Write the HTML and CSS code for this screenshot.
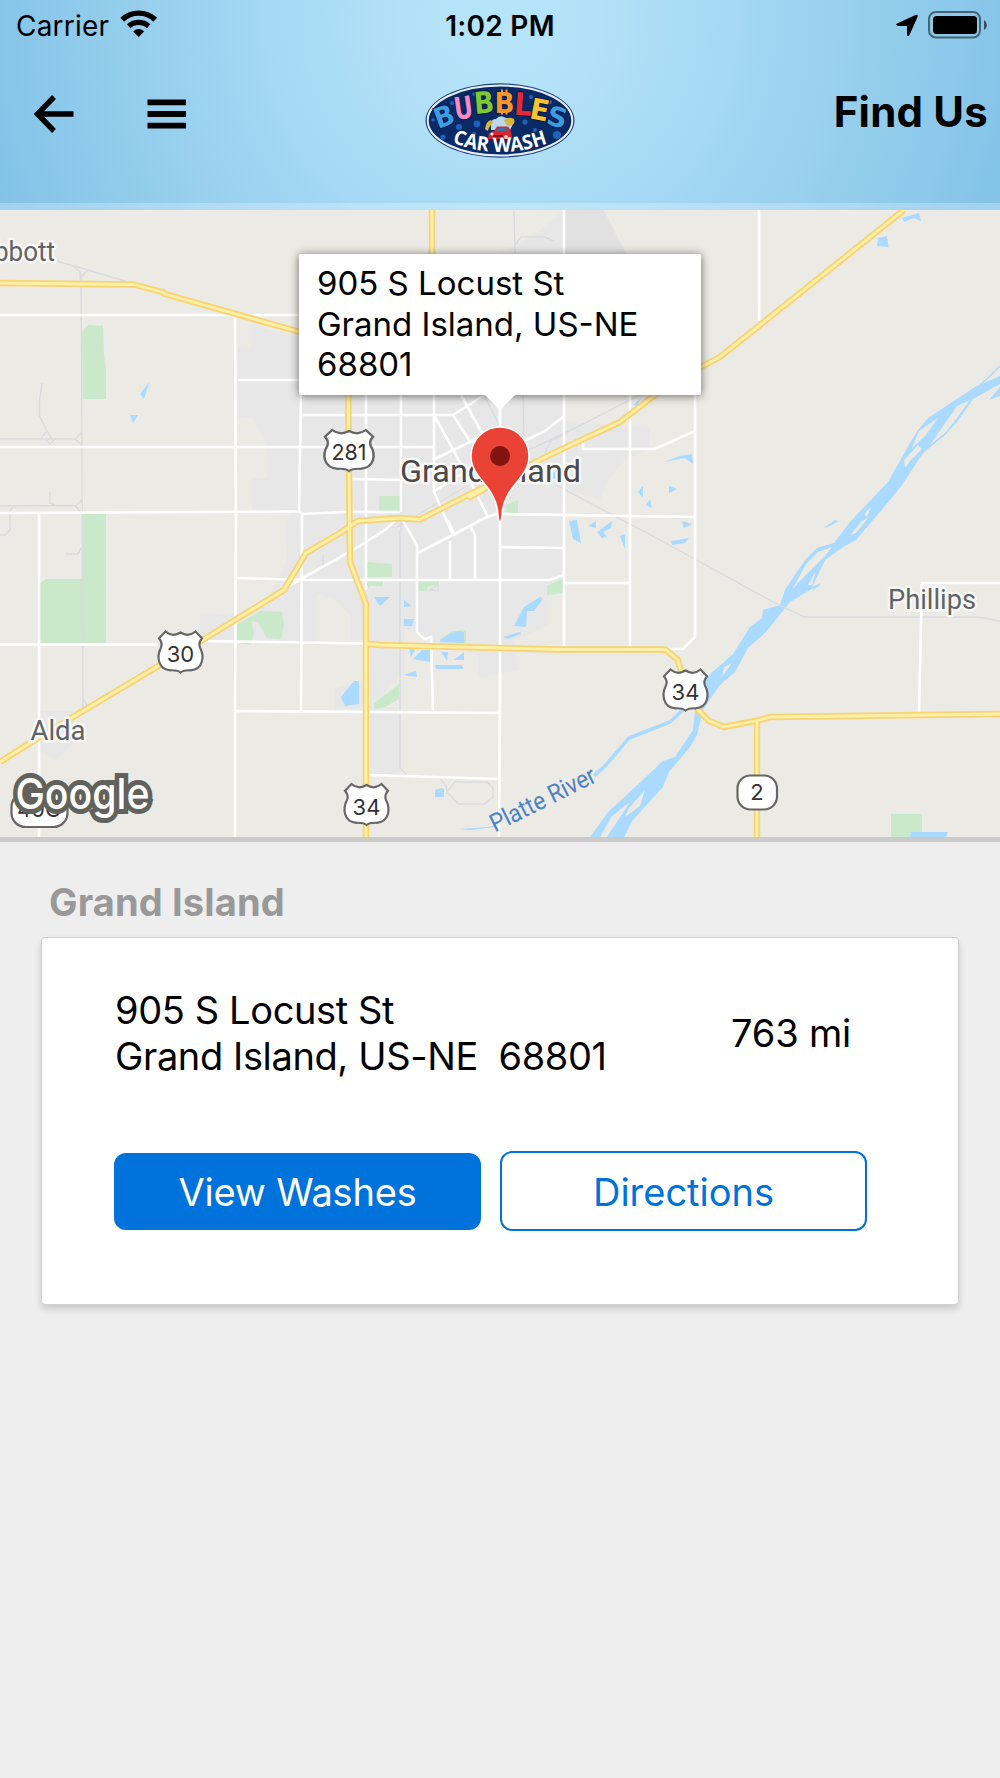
FILE: index.html
```
<!DOCTYPE html>
<html lang="en">
<head>
    <meta charset="UTF-8">
    <meta name="viewport" content="width=device-width, initial-scale=1.0">
    <title>Find Us</title>
    <link rel="stylesheet" href="styles.css">
</head>
<body>
    <header class="header">
        <div class="status-bar">
            <div class="status-left">
                <span class="carrier">Carrier</span>
                <svg class="wifi" width="38" height="28" viewBox="0 0 38 28">
                    <path d="M2.2 9.7 A24 24 0 0 1 35.2 9.7" fill="none" stroke="#000" stroke-width="5.4"/>
                    <path d="M8.7 16.2 A15 15 0 0 1 28.7 16.2" fill="none" stroke="#000" stroke-width="5.2"/>
                    <path d="M13.2 21.4 Q18.7 16.6 24.2 21.4 L18.7 27 Z"/>
                </svg>
            </div>
            <span class="time">1:02 PM</span>
            <div class="status-right">
                <svg width="24" height="24" viewBox="0 0 24 24">
                    <path d="M1 10.4 L19.5 2 Q22.4 1 21.5 4 L13.500 22 Q12 24.5 11 22 L11 13 L2 12.9 Q-1 12 1 10.4 Z"/>
                </svg>
                <svg width="60" height="28" viewBox="0 0 60 28">
                    <rect x="1" y="1" width="51" height="25.6" rx="7" fill="none" stroke="#000" stroke-opacity=".5" stroke-width="2"/>
                    <rect x="5" y="5" width="44" height="18" rx="3.5"/>
                    <path d="M56 9 Q59 11 59 14 Q59 17 56 19 Z" fill-opacity=".6"/>
                </svg>
            </div>
        </div>
        <nav class="nav">
            <div class="nav-buttons">
                <svg width="40" height="38" viewBox="0 0 40 38">
                    <path d="M39.5 19 H5 M20 2 L3.5 19 L20 36" fill="none" stroke="#000" stroke-width="5.4"/>
                </svg>
                <svg width="40" height="38" viewBox="0 0 40 38">
                    <path d="M.5 7.3 H39 M.5 19 H39 M.5 30.7 H39" stroke="#000" stroke-width="5.8"/>
                </svg>
            </div>
            <svg class="logo" width="150" height="76" viewBox="425 82 150 76">
                <ellipse cx="500" cy="120.5" rx="74.5" ry="37.2" fill="#1c3f7c"/>
                <ellipse cx="500" cy="120.5" rx="72.3" ry="35" fill="#0a2a66" stroke="#e8effa" stroke-width="2"/>
                <g fill="#1f62bd">
                    <circle cx="459" cy="127" r="3"/>
                    <circle cx="477" cy="124" r="3.4"/>
                    <circle cx="525" cy="122" r="2.6"/>
                    <circle cx="557" cy="135" r="4"/>
                    <circle cx="443" cy="137" r="2.6"/>
                    <circle cx="452" cy="103" r="2"/>
                    <circle cx="474" cy="94" r="1.8"/>
                    <circle cx="531" cy="97" r="2"/>
                    <circle cx="550" cy="102" r="2"/>
                    <circle cx="474" cy="134" r="2"/>
                    <circle cx="535" cy="130" r="2"/>
                    <circle cx="433" cy="120" r="1.8"/>
                </g>
                <g class="logo-letters">
                    <text transform="translate(438 129) rotate(-20)" fill="#3d9be0" font-size="28" textLength="20" lengthAdjust="spacingAndGlyphs">B</text>
                    <text transform="translate(455.500 120) rotate(-8)" fill="#f58ac6" font-size="31" textLength="19" lengthAdjust="spacingAndGlyphs">U</text>
                    <text transform="translate(475 114) rotate(-5)" fill="#7fc832" font-size="30" textLength="20" lengthAdjust="spacingAndGlyphs">B</text>
                    <text transform="translate(494.500 112.500)" fill="#f5962a" font-size="28" textLength="20" lengthAdjust="spacingAndGlyphs">B</text>
                    <text transform="translate(513.500 114.500) rotate(4)" fill="#e02b35" font-size="31" textLength="18" lengthAdjust="spacingAndGlyphs">L</text>
                    <text transform="translate(528.500 118) rotate(11)" fill="#f8c32c" font-size="29" textLength="19" lengthAdjust="spacingAndGlyphs">E</text>
                    <text transform="translate(545 123.500) rotate(16)" fill="#3d9be0" font-size="27" textLength="20" lengthAdjust="spacingAndGlyphs">S</text>
                </g>
                <!-- little red car with foam, antenna bits on the orange B -->
                <path d="M502 89.500 V93 M506.500 89.500 V93 M502 111 V114.500 M506.500 111 V114.500" stroke="#f5962a" stroke-width="2"/>
                <path d="M491 127 Q490 119 496 119 Q500 114 506 118 Q513 117 513 124 L510 130 L491 130 Z" fill="#b9d8ee"/>
                <path d="M485 129 Q486 121 491 120 L493 123 Q489 126 488 131 Z M504 120 q5 -4 10 -1 q2 5 -4 7 q-4 0 -6 -6z" fill="#d9b53c"/>
                <path d="M488 139 L489 133 L494 131 L497 126.500 H508 L511 131 L512 139 Z" fill="#d8262e"/>
                <path d="M496 131 L498 128 H506 L508 131 Z" fill="#4a6d9c"/>
                <path d="M493 136 h10" stroke="#7d1018" stroke-width="2"/>
                <circle cx="492" cy="134" r="1.500" fill="#fff"/>
                <circle cx="506" cy="137" r="2" fill="#f4c9c0"/>
                <path id="washCurve" d="M451 142 Q500 162 551 142" fill="none"/>
                <text class="logo-wash"><textPath href="#washCurve" startOffset="1" textLength="98" lengthAdjust="spacingAndGlyphs">CAR WASH</textPath></text>
            </svg>
            <h1 class="title">Find Us</h1>
        </nav>
        <div class="header-strip"></div>
    </header>

    <section class="map">
        <svg class="map-canvas" width="1000" height="627" viewBox="0 210 1000 627">
            <defs>
                <path id="shield" d="M-15 -20.500 L-21.500 -13.800 Q-17.500 -9 -19.500 -4.500 C-24 4 -23 17.500 -10 18.300 Q-3 18 0 20.500 Q3 18 10 18.300 C23 17.500 24 4 19.500 -4.500 Q17.500 -9 21.500 -13.800 L15 -20.500 Q8 -14.500 0 -19.500 Q-8 -14.500 -15 -20.500 Z"/>
                <g id="highways">
                    <path d="M0 283 L134 284.500 L162 292 L165 294 L300 332 L348 346"/>
                    <path d="M0 762 L38 738 L73 717 L160 665 L201 641 L284 590 L306 553 L340 533 L358 521 L400 518 L420 519.500 L470 494 L560 450 L620 422 L655 395 L701 367 L720 357 L904 210"/>
                    <path d="M432 210 V254 M348 380 L350 562 L366 604 V837"/>
                    <path d="M366 643.500 L380 645 L560 649.500 H662 L666 650 L678 660 L683 680 L698 710 L709 721 L724 727 L760 720 L770 717 L1000 714"/>
                    <path d="M757 722 V837 M467 495 L470 497 L488 487"/>
                </g>
            </defs>

            <!-- city area -->
            <g fill="#e7e7e7">
                <path d="M251 325 L300 338 L330 300 L430 254 H500 L540 230 L564 210 H600 L628 254 L640 395 H564 V420 L600 425 L650 428 V449 L625 460 L608 480 L600 500 L566 490 L564 575 L548 590 V625 L515 640 L518 670 L478 678 V655 L430 640 L404 628 V672 L374 703 L400 710 V770 L405 775 H370 V640 H350 V615 L335 600 L317 593 V643 H200 V613 L235 615 L270 595 L287 560 L285 525 L290 513 H252 V478 H267 V445 L253 418 H238 V348 H251 Z"/>
                <path d="M335 688 L366 680 V709 H335 Z M40 711 H72 V745 L55 760 L40 752 Z"/>
            </g>
            <path d="M564 210 H604 L626 254 H564 Z" fill="#e1e1e2"/>

            <!-- parks -->
            <g fill="#cae8ca">
                <path d="M82 332 L88 325 L103 326 L104 355 L106 370 V399 H83 Z"/>
                <path d="M83 514 H106 V643 H83 Z M40 583 L46 579 H82 V643 H40 Z"/>
                <path d="M379 496 H400 V511 H379 Z M506 505 L518 500 V513 H506 Z"/>
                <path d="M367 562 L392 564 V577 H367 Z M367 580 H383 V586 H370 L367 590 Z"/>
                <path d="M418 580 H439 V584 L427 587 V591 H418 Z M547 586 L563 578 V593 L547 595 Z"/>
                <path d="M237 625 L260 611 L282 612 L284 625 L281 639 L267 638 L258 622 L251 621 L254 633 L251 645 L237 643 Z"/>
                <path d="M374 703 L399 684 V699 L385 707 L374 709 Z M440 640 L452 631 L466 630 V643 Z"/>
                <path d="M891 814 H922 V837 H891 Z"/>
            </g>

            <!-- ponds -->
            <g fill="#aadaff">
                <path d="M140 394 L149.500 382 L144 399 Z M130 415 H138 L133 423 Z"/>
                <path d="M374 597 H390 L380 606 Z M404 600 L412 606 L404 607 Z M404 619 H414 L412 626 H404 Z"/>
                <path d="M440 640 L448 635 L458 631 L464 632 V643 L440 642 Z M409 648 L415 650 L411 657 Z M413 659 L422 650 H430 V662 Z"/>
                <path d="M441 652 H448 L447 661 Z M454 660 L464 652 V660 Z M435 665 H462 L463 669 H436 Z M403 675 L416 671 L417 677 Z"/>
                <path d="M341 697 L354 681 H359 V704 L345 706 Z M514 626 L524 607 L540 597 L543 599 L534 611 H527 L526 627 Z"/>
                <path d="M503 637 L520 632 L521 634 L508 639 Z M435 790 L441 788 L444 789 V797 H435 Z"/>
                <path d="M569 521 L577 520 L581 543 L573 539 Z M588 526 L596 521 V528 Z M597 532 L612 521 L611 528 L603 532 L607 537 L602 538 Z"/>
                <path d="M620 536 L625 534 V549 Z M664 462 L680 456 L692 454 L693 464 L685 458 Z M638 492 L643 486 V498 Z M646 505 L650 499 L652 508 Z"/>
                <path d="M669 486 L677 489 L669 493 Z M682 521 L692 524 L684 528 Z M671 541 L689 538 L685 543 L672 545 Z"/>
                <path d="M902 218 L919 213 L921 221 L914 218 L904 222 Z M878 238 L887 236 L888.500 247 L877 246 Z M989 400 L1000 387 V396 Z"/>
                <path d="M911 832 H948 L946 837 H910 Z M552 474 L557 470 V480 L552 478 Z M633 405 L641 398 L637 406 Z"/>
                <path d="M824 528 L835 520 L839 521 L830 526 Z M459 829 L488 827 L496 825 V827 L470 830 Z"/>
            </g>

            <!-- Platte River -->
            <path fill="#aadaff" d="M1000 376 L975 387 L928 418 L918 430 L910 443 L888 482 L850 522 L834 543 L817 548 L805 560 L795 575 L785 590 L780 605 L763 610 L762 618 L750 627 L733 654 L708 676 L696 700 L693 730 L675 757 L663 761 L632 790 L608 812 L590 837 H624 L633 820 L663 787 L669 772 L690 747 L697 735 L703 710 L719 686 L735 672 L748 648 L766 632 L790 602 L815 587 L821 583 L812 587 L825 560 L843 547 L856 540 L890 500 L902 485 L923 453 L945 435 L957 422 L973 399 L1000 384 Z"/>
            <g fill="#ebeae4">
                <path d="M938 418 L919 431 L912 448 L925 436 Z M970 400 L957 406 L930 445 L947 431 L957 418 Z"/>
                <path d="M918 445 L904 460 L905 468 L911 460 L922 449 Z"/>
                <path d="M832 547 L818 552 L806 564 L792 590 L798 583 L825 556 Z M816 571 L808 585 L812 585 Z M871 507 L864 514 L867 517 Z"/>
                <path d="M732 663 L724 667 L722 677 Z M645 790 L629 808 L625 817 L640 806 Z M630 802 L612 816 L600 837 H607 Z M850 535 L862 521 L868 518 L856 533 Z"/>
            </g>
            <g fill="none" stroke="#aadaff">
                <path d="M594 776 L605 766 L629 738 L670 722 L684 709" stroke-width="3.500"/>
                <path d="M978 387 L990 376 L1000 366" stroke-width="1.500"/>
                <path d="M813 589 L820 584" stroke-width="2"/>
            </g>

            <!-- railways and runways -->
            <g fill="none" stroke="#d9dbde" stroke-width="1.400">
                <path d="M57 261 L125 281 M73 266 L80 272 V278 L88 270"/>
                <path d="M81 275 L82 450 L83 708 L88 706 M83 698 L87 706"/>
                <path d="M42 383 L39.500 400 V416 L47 431 L52 439 M47 431 L41 438 M45 439 L50 444 L55 439"/>
                <path d="M0 439 H75 L81 433 M75 439 L81 444 M0 506 L76 505.500 L82 500 M76 506 L80 512 M50 492 V503 L55 505"/>
                <path d="M10 512 V530 L5 535 H0 M65 554 H78 L81 548 M13 507 L10 511 M323 555 V566"/>
                <path d="M400 530 V768 L406 774 M440 779 L446 785 L447 792 L455 782 H487 L493 788 V797 L484 804 H458 L447 792"/>
                <path d="M397 527 L465 487 M401 520 V530 M484 395 L500 427 M514 210 L515 254 L523 395 L524 437 M515 245 L521 237 H545 L554 241"/>
                <path d="M529 450 L577 427 L640 395 M545 453 L550 442 L577 427 M556 485 L660 540 L775 603 L804 617 H978 L1000 621"/>
                <path d="M430 590 L438 585 V591 Z"/>
            </g>

            <!-- local roads -->
            <g fill="none" stroke="#fff" stroke-width="2.600">
                <path d="M0 315 H340 M235 315 L236 520 L235 711 V837 M238 380 H300 M0 447 H433 M0 513 L299 511.500 M39 513 V837"/>
                <path d="M301 395 L299 511 M301 415 H453 L500 385 M366 395 V590 M401 395 V512 M434 395 V492 L453 535"/>
                <path d="M434 415 L467 475 L488 517 M453 415 L471 443 M461 395 L482 433 M433 460 L482 436 M433 492 L460 475"/>
                <path d="M564 210 V416 L545 431 L500 453 M630 395 V648 M695 395 V637 L683 649 H668 M583 443 V449 H655 L695 431"/>
                <path d="M299 511 L302 514 L345 512 H400 M352 479 L403 480 M500 400 V700 L499 837 M500 514 L695 517 M500 547 L564 548"/>
                <path d="M285 588 L353 550 L385 530 L395 521 M403 521 L417 545 V632 L424 639 L431 637 L433 710 M418 553 L487 517 L500 513"/>
                <path d="M470 526 L475 535 V580 M450 541 V580 M448 520 L455 536 M235 578 L310 580 L550 580 L564 575 M564 416 V646 M564 583 H630"/>
                <path d="M0 644.500 H158 M200 641 L366 643.500 M302 513 L301 711 M235 711 L500 713 M370 775 L499 779"/>
                <path d="M759 210 V321 M1000 583 H922 L919 712"/>
            </g>

            <!-- highways: dark casing, then a light centre line -->
            <use class="road-casing" href="#highways"/>
            <use class="road-line" href="#highways"/>

            <!-- place names -->
            <g class="place">
                <text x="-23" y="260.500" textLength="78" lengthAdjust="spacingAndGlyphs">Abbott</text>
                <text x="30.500" y="739.500" textLength="55" lengthAdjust="spacingAndGlyphs">Alda</text>
                <text x="888" y="608.500" textLength="88" lengthAdjust="spacingAndGlyphs">Phillips</text>
                <text class="city" x="400" y="481.500" textLength="181" lengthAdjust="spacingAndGlyphs">Grand Island</text>
            </g>
            <text class="river" transform="translate(495 832.500) rotate(-26.500)" textLength="115" lengthAdjust="spacingAndGlyphs">Platte River</text>

            <!-- route shields -->
            <g class="shields">
                <use href="#shield" transform="translate(349 450.500) scale(1.120 1)"/>
                <use href="#shield" x="180.500" y="652"/>
                <use href="#shield" x="366.500" y="804.500"/>
                <use href="#shield" x="685.500" y="690"/>
                <rect x="737.500" y="775.500" width="39.500" height="34" rx="13"/>
                <rect x="11.500" y="793" width="56" height="34" rx="14"/>
            </g>
            <g class="shield-text">
                <text x="349" y="460" textLength="35" lengthAdjust="spacingAndGlyphs">281</text>
                <text x="180.500" y="661.500">30</text>
                <text x="366.500" y="814.500">34</text>
                <text x="685.500" y="699.500">34</text>
                <text x="757" y="799.500">2</text>
                <text x="39" y="817">40C</text>
            </g>

            <text class="google" x="15.500" y="809" textLength="134" lengthAdjust="spacingAndGlyphs">Google</text>

            <!-- marker -->
            <path d="M500 521.500 C498 521.500 498.300 517 497.500 510 C494 485 471 478 471 456 A29 29 0 0 1 529 456 C529 478 506 485 502.500 510 C501.700 517 502 521.500 500 521.500 Z" fill="#ea4335" stroke="#fff" stroke-width="1.500"/>
            <circle cx="500" cy="456" r="10" fill="#811411"/>
        </svg>
        <div class="callout">905 S Locust St<br>Grand Island, US-NE<br>68801</div>
    </section>

    <main class="content">
        <h2 class="city-name">Grand Island</h2>
        <div class="card">
            <div class="card-info">
                <p class="address">905 S Locust St<br>Grand Island, US-NE&nbsp; 68801</p>
                <span class="distance">763 mi</span>
            </div>
            <div class="card-actions">
                <button type="button" class="btn btn-primary">View Washes</button>
                <button type="button" class="btn btn-outline">Directions</button>
            </div>
        </div>
    </main>
</body>
</html>
```
FILE: styles.css
```
* {
    box-sizing: border-box;
}

body {
    font-family: Inter, "Liberation Sans", sans-serif;
    background-color: #eeeeee;
    margin: 0;
    color: #000;
}

.header {
    display: flex;
    flex-direction: column;
    height: 210px;
    background: radial-gradient(circle at 500px 20px, #b6e4f9 0, #b3e1f7 100px, #a4d8f4 235px, #93cdec 390px, #83c3e8 530px);
}

.status-bar {
    display: grid;
    grid-template-columns: 1fr auto 1fr;
    align-items: center;
    height: 50px;
    padding: 1px 12px 0;
    font-size: 28px;
}

.status-left,
.status-right {
    display: flex;
    align-items: center;
}

.status-left {
    gap: 11px;
    padding-left: 4px;
}

.status-right {
    justify-content: flex-end;
    gap: 8px;
}

.status-right svg {
    margin-top: -2px;
}

.carrier {
    letter-spacing: 0.2px;
}

.wifi {
    margin-top: -3px;
}

.time {
    font-weight: 600;
    letter-spacing: 0.3px;
}

.nav {
    display: grid;
    grid-template-columns: 1fr auto 1fr;
    height: 153px;
    padding: 0 12px;
}

.nav-buttons {
    display: flex;
    gap: 73px;
    padding: 45px 0 0 22px;
}

.logo {
    margin-top: 32px;
}

.logo-letters {
    font-family: "DejaVu Sans", sans-serif;
    font-weight: bold;
    stroke: #06194a;
    stroke-width: 2px;
    paint-order: stroke;
}

.logo-wash {
    font-family: "Open Sans", sans-serif;
    font-weight: 700;
    font-size: 20px;
    fill: #fff;
}

.title {
    margin: 36px 0 0;
    text-align: right;
    font-size: 42px;
    line-height: 51px;
    font-weight: 700;
    letter-spacing: 0.2px;
}

.header-strip {
    height: 7px;
    background: rgba(255, 255, 255, 0.25);
}

.map {
    position: relative;
    height: 632px;
    background-color: #ebeae4;
    border-bottom: 5px solid #cacaca;
}

.map-canvas {
    display: block;
}

.road-casing {
    fill: none;
    stroke: #f8d374;
    stroke-width: 6.4px;
    stroke-linejoin: round;
}

.road-line {
    fill: none;
    stroke: #fff0a8;
    stroke-width: 2.8px;
    stroke-linejoin: round;
}

.place {
    font-family: Roboto, sans-serif;
    font-size: 28px;
    fill: #5f6368;
    stroke: #f8f8f6;
    stroke-width: 5px;
    stroke-linejoin: round;
    paint-order: stroke;
}

.city {
    font-size: 32px;
    fill: #4a4a4c;
}

.river {
    font-family: Roboto, sans-serif;
    font-size: 25px;
    fill: #4d83c6;
}

.shields {
    fill: #fff;
    stroke: #666;
    stroke-width: 2.2px;
}

.shield-text {
    font-size: 22px;
    fill: #333;
    text-anchor: middle;
}

.google {
    font-family: Inter, sans-serif;
    font-size: 43px;
    font-weight: 500;
    fill: #fff;
    stroke: #62625d;
    stroke-width: 10px;
    paint-order: stroke;
}

/* info window over the marker */
.callout {
    position: absolute;
    left: 299px;
    top: 44px;
    width: 402px;
    height: 141px;
    padding: 9px 18px;
    background: #fff;
    border-radius: 2px;
    box-shadow: 0 1px 10px rgba(0, 0, 0, 0.55);
    font-size: 33px;
    line-height: 40.7px;
}

.callout::after {
    content: "";
    position: absolute;
    left: 186px;
    top: 100%;
    border: 15px solid transparent;
    border-top-color: #fff;
    border-bottom: 0;
}

.content {
    padding: 36px 41px 60px;
}

.city-name {
    margin: 0;
    padding-left: 8px;
    font-size: 38px;
    line-height: 48px;
    letter-spacing: 0.15px;
    color: #999;
}

.card {
    height: 368px;
    margin-top: 11px;
    padding: 49px 91px 0 72px;
    background: #fff;
    border: 1px solid #d0d0d0;
    border-radius: 4px;
    box-shadow: 0 4px 7px rgba(0, 0, 0, 0.16);
}

.card-info {
    display: flex;
    align-items: center;
    justify-content: space-between;
    padding: 0 16px 0 1px;
    font-size: 38px;
}

.address {
    margin: 0;
    line-height: 46px;
    letter-spacing: -0.38px;
}

.distance {
    letter-spacing: -0.2px;
}

.card-actions {
    display: grid;
    grid-template-columns: 1fr 1fr;
    align-items: center;
    gap: 19px;
    margin-top: 72px;
}

.btn {
    height: 77px;
    padding: 2px 0 0;
    border: none;
    border-radius: 12px;
    font-family: inherit;
    font-size: 38px;
}

.btn-primary {
    background-color: #0072db;
    color: #fff;
    letter-spacing: -0.2px;
}

.btn-outline {
    height: 80px;
    background-color: #fff;
    border: 2px solid #0072db;
    color: #0072db;
}
```
